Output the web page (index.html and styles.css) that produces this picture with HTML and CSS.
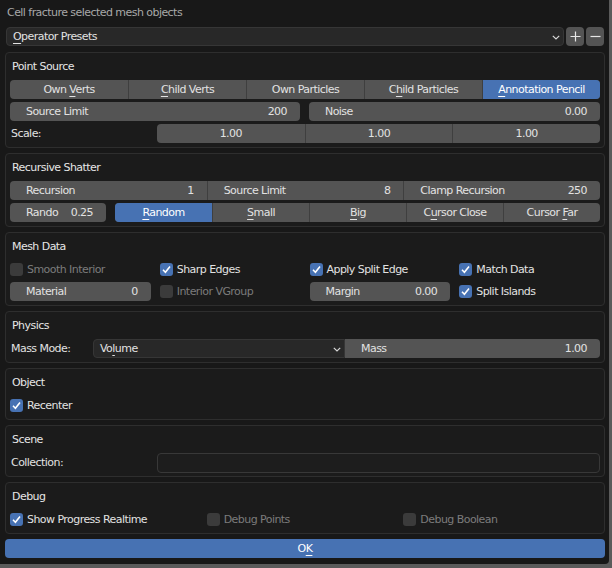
FILE: index.html
```html
<!DOCTYPE html>
<html>
<head>
<meta charset="utf-8">
<link rel="stylesheet" href="styles.css">
</head>
<body>
<div class="dialog">
  <div class="title">Cell fracture selected mesh objects</div>

  <div class="presets">
    <div class="dropdown grow"><span><u>O</u>perator Presets</span>
      <svg class="chev" width="8" height="5" viewBox="0 0 8 5"><polyline points="0.8,0.8 4,4 7.2,0.8" fill="none" stroke="#d8d8d8" stroke-width="1.2"/></svg>
    </div>
    <div class="sqbtn"><svg width="11" height="11" viewBox="0 0 11 11"><path d="M5.5 0.5V10.5M0.5 5.5H10.5" stroke="#e6e6e6" stroke-width="1.2"/></svg></div>
    <div class="sqbtn"><svg width="11" height="11" viewBox="0 0 11 11"><path d="M0.5 5.5H10.5" stroke="#e6e6e6" stroke-width="1.2"/></svg></div>
  </div>

  <section class="panel">
    <div class="ptitle">Point Source</div>
    <div class="rows">
      <div class="seg cols5">
        <div class="opt">Own <u>V</u>erts</div>
        <div class="opt"><u>C</u>hild Verts</div>
        <div class="opt">Own Particles</div>
        <div class="opt">C<u>h</u>ild Particles</div>
        <div class="opt active"><u>A</u>nnotation Pencil</div>
      </div>
      <div class="pair">
        <div class="num"><span>Source Limit</span><span>200</span></div>
        <div class="num"><span>Noise</span><span>0.00</span></div>
      </div>
      <div class="labeled">
        <div class="lbl">Scale:</div>
        <div class="seg cols3">
          <div class="opt">1.00</div>
          <div class="opt">1.00</div>
          <div class="opt">1.00</div>
        </div>
      </div>
    </div>
  </section>

  <section class="panel">
    <div class="ptitle">Recursive Shatter</div>
    <div class="rows">
      <div class="seg cols3">
        <div class="opt numopt"><span>Recursion</span><span>1</span></div>
        <div class="opt numopt"><span>Source Limit</span><span>8</span></div>
        <div class="opt numopt"><span>Clamp Recursion</span><span>250</span></div>
      </div>
      <div class="rando-row">
        <div class="num rando"><span>Rando</span><span>0.25</span></div>
        <div class="seg cols5">
          <div class="opt active"><u>R</u>andom</div>
          <div class="opt"><u>S</u>mall</div>
          <div class="opt"><u>B</u>ig</div>
          <div class="opt">C<u>u</u>rsor Close</div>
          <div class="opt">Cursor <u>F</u>ar</div>
        </div>
      </div>
    </div>
  </section>

  <section class="panel">
    <div class="ptitle">Mesh Data</div>
    <div class="rows">
      <div class="grid4">
        <div class="check disabled"><span class="box"></span>Smooth Interior</div>
        <div class="check"><span class="box on"><svg width="13" height="13" viewBox="0 0 13 13"><polyline points="3,6.8 5.4,9.2 10,3.6" fill="none" stroke="#fff" stroke-width="1.6"/></svg></span>Sharp Edges</div>
        <div class="check"><span class="box on"><svg width="13" height="13" viewBox="0 0 13 13"><polyline points="3,6.8 5.4,9.2 10,3.6" fill="none" stroke="#fff" stroke-width="1.6"/></svg></span>Apply Split Edge</div>
        <div class="check"><span class="box on"><svg width="13" height="13" viewBox="0 0 13 13"><polyline points="3,6.8 5.4,9.2 10,3.6" fill="none" stroke="#fff" stroke-width="1.6"/></svg></span>Match Data</div>
      </div>
      <div class="grid4">
        <div class="num"><span>Material</span><span>0</span></div>
        <div class="check disabled"><span class="box"></span>Interior VGroup</div>
        <div class="num"><span>Margin</span><span>0.00</span></div>
        <div class="check"><span class="box on"><svg width="13" height="13" viewBox="0 0 13 13"><polyline points="3,6.8 5.4,9.2 10,3.6" fill="none" stroke="#fff" stroke-width="1.6"/></svg></span>Split Islands</div>
      </div>
    </div>
  </section>

  <section class="panel">
    <div class="ptitle">Physics</div>
    <div class="rows">
      <div class="mass-row">
        <div class="lbl">Mass Mode:</div>
        <div class="dropdown joined-left"><span>Vo<u>l</u>ume</span>
          <svg class="chev" width="8" height="5" viewBox="0 0 8 5"><polyline points="0.8,0.8 4,4 7.2,0.8" fill="none" stroke="#d8d8d8" stroke-width="1.2"/></svg>
        </div>
        <div class="num joined-right"><span>Mass</span><span>1.00</span></div>
      </div>
    </div>
  </section>

  <section class="panel">
    <div class="ptitle">Object</div>
    <div class="rows">
      <div class="check"><span class="box on"><svg width="13" height="13" viewBox="0 0 13 13"><polyline points="3,6.8 5.4,9.2 10,3.6" fill="none" stroke="#fff" stroke-width="1.6"/></svg></span>Recenter</div>
    </div>
  </section>

  <section class="panel">
    <div class="ptitle">Scene</div>
    <div class="rows">
      <div class="labeled">
        <div class="lbl">Collection:</div>
        <div class="field"></div>
      </div>
    </div>
  </section>

  <section class="panel">
    <div class="ptitle">Debug</div>
    <div class="rows">
      <div class="grid3">
        <div class="check"><span class="box on"><svg width="13" height="13" viewBox="0 0 13 13"><polyline points="3,6.8 5.4,9.2 10,3.6" fill="none" stroke="#fff" stroke-width="1.6"/></svg></span>Show Progress Realtime</div>
        <div class="check disabled"><span class="box"></span>Debug Points</div>
        <div class="check disabled"><span class="box"></span>Debug Boolean</div>
      </div>
    </div>
  </section>

  <div class="okbtn">O<u>K</u></div>
</div>
</body>
</html>
```

FILE: styles.css
```css
html, body {
  margin: 0;
  padding: 0;
  background: #5b5b5b;
}
body {
  width: 612px;
  height: 568px;
  overflow: hidden;
  font-family: "DejaVu Sans", sans-serif;
  font-size: 11px;
  letter-spacing: -0.55px;
  color: #e2e2e2;
}
u {
  text-decoration: underline;
  text-underline-offset: 3px;
  text-decoration-thickness: 1px;
}
.dialog {
  width: 609px;
  height: 564px;
  background: #181818;
  border-radius: 0 0 4px 0;
  box-sizing: border-box;
  padding: 0 0 0 5px;
}
.title {
  height: 27px;
  line-height: 25px;
  padding-left: 2px;
  color: #a8a8a8;
}
.presets {
  display: flex;
  gap: 2px;
  height: 19px;
  margin-left: 1px;
  width: 598px;
}
.grow { flex: 1; }
.dropdown {
  position: relative;
  background: #282828;
  border: 1px solid #363636;
  border-radius: 4px;
  box-sizing: border-box;
  height: 19px;
  line-height: 17px;
  padding-left: 6px;
  color: #e2e2e2;
}
.chev {
  position: absolute;
  right: 3px;
  top: 7px;
}
.sqbtn {
  width: 18px;
  height: 19px;
  background: #545454;
  border-radius: 4px;
  display: flex;
  align-items: center;
  justify-content: center;
}
.panel {
  width: 600px;
  box-sizing: border-box;
  border: 1px solid #2e2e2e;
  border-radius: 4px;
  background: #1b1b1b;
  margin-top: 5px;
  padding: 0 4px 4px 4px;
}
.presets + .panel { margin-top: 6px; }
.ptitle {
  height: 27px;
  line-height: 28px;
  padding-left: 2px;
  color: #e6e6e6;
}
.rows {
  display: flex;
  flex-direction: column;
  gap: 3px;
}
.seg {
  display: grid;
  height: 19px;
  background: #545454;
  border-radius: 4px;
  overflow: hidden;
}
.cols5 { grid-template-columns: repeat(5, 1fr); }
.cols3 { grid-template-columns: repeat(3, 1fr); }
.opt {
  line-height: 19px;
  text-align: center;
  white-space: nowrap;
  border-left: 1px solid #3f3f3f;
  color: #e2e2e2;
}
.opt:first-child { border-left: none; }
.opt.active {
  background: #4772b3;
  color: #ffffff;
}
.numopt {
  display: flex;
  justify-content: space-between;
  padding: 0 13px 0 16px;
  text-align: left;
}
.num {
  display: flex;
  justify-content: space-between;
  height: 19px;
  line-height: 19px;
  background: #545454;
  border-radius: 4px;
  padding: 0 13px 0 16px;
  white-space: nowrap;
  box-sizing: border-box;
}
.pair {
  display: grid;
  grid-template-columns: 290px 1fr;
  gap: 9px;
}
.labeled {
  display: grid;
  grid-template-columns: 147px 1fr;
  height: 19px;
}
.lbl {
  line-height: 19px;
  padding-left: 1px;
  color: #e2e2e2;
}
.rando-row {
  display: grid;
  grid-template-columns: 96px 1fr;
  gap: 9px;
}
.grid4 {
  display: grid;
  grid-template-columns: repeat(4, 1fr);
  column-gap: 9px;
  height: 19px;
}
.grid3 {
  display: grid;
  grid-template-columns: repeat(3, 1fr);
  height: 19px;
}
.check {
  display: flex;
  align-items: center;
  height: 19px;
  white-space: nowrap;
  color: #e2e2e2;
}
.box {
  width: 13px;
  height: 13px;
  border-radius: 3px;
  background: #545454;
  margin-right: 4px;
  flex: none;
  display: flex;
}
.box.on { background: #4772b3; }
.check.disabled { color: #7c7c7c; }
.check.disabled .box { background: #3b3b3b; }
.mass-row {
  display: grid;
  grid-template-columns: 83px 252px 1fr;
  height: 19px;
}
.joined-left {
  border-radius: 4px 0 0 4px;
}
.joined-right {
  border-radius: 0 4px 4px 0;
}
.field {
  height: 20px;
  box-sizing: border-box;
  border: 1px solid #383838;
  border-radius: 4px;
  background: #1d1d1d;
}
.okbtn {
  width: 600px;
  height: 19px;
  margin-top: 5px;
  background: #4772b3;
  border-radius: 4px;
  text-align: center;
  line-height: 19px;
  color: #ffffff;
}
```
